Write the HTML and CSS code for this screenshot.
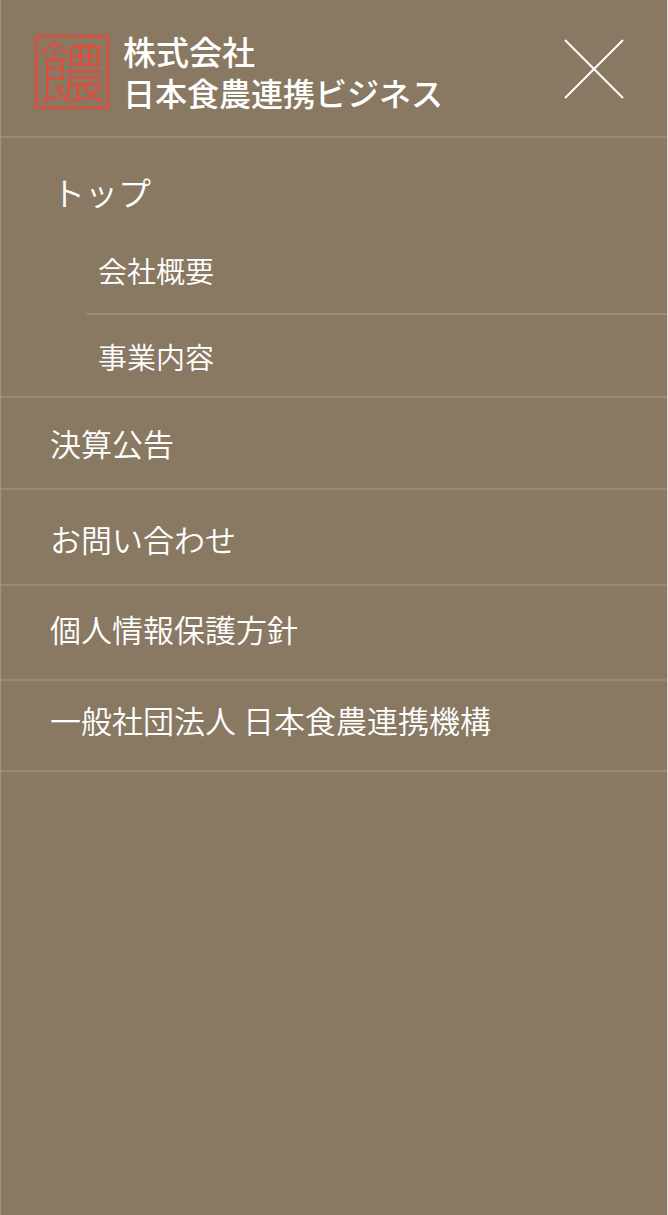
FILE: index.html
```html
<!DOCTYPE html>
<html lang="ja">
<head>
<meta charset="utf-8">
<meta name="viewport" content="width=device-width, initial-scale=1">
<title>株式会社 日本食農連携ビジネス</title>
<link rel="stylesheet" href="styles.css">
</head>
<body>
<div class="drawer">
  <header class="header">
    <a class="brand" href="#">
      <svg class="seal" viewBox="0 0 74 74" aria-hidden="true">
        <rect x="1.4" y="1.4" width="71.2" height="71.2"/>
        <path d="M7.5 19V17L19.7 7.5 31.5 18M19.7 16V24.5M12.5 65V24.5H27.7V43.5H12.5M12.5 33.5H27.7M7.5 66.5 23 61.5M21 51 31 65M23 54 29 51"/>
        <path d="M35.7 12H63.7V29.7H35.7ZM35.7 21H63.7M45.3 7.5V29.7M54.3 7.5V29.7M67 36.3H34.5V51Q34 60 31.5 67M38.5 43H64M34.5 49.7H67M42.7 49.7V65M36 66.5 55.5 62.5M48 50Q54 60 67 66.5M65 53 57 59"/>
      </svg>
      <span class="brand-name">
        <span class="brand-type">株式会社</span>
        <span class="brand-title">日本食農連携ビジネス</span>
      </span>
    </a>
    <button class="close" type="button" aria-label="閉じる">
      <svg viewBox="0 0 60 60" aria-hidden="true"><path d="M1 1 59 59M59 1 1 59"/></svg>
    </button>
  </header>
  <nav>
    <ul class="menu">
      <li>
        <a class="top" href="#">トップ</a>
        <ul class="submenu">
          <li><a href="#">会社概要</a></li>
          <li><a href="#">事業内容</a></li>
        </ul>
      </li>
      <li><a class="item" href="#">決算公告</a></li>
      <li><a class="item contact" href="#">お問い合わせ</a></li>
      <li><a class="item privacy" href="#">個人情報保護方針</a></li>
      <li><a class="item partner" href="#">一般社団法人 日本食農連携機構</a></li>
    </ul>
  </nav>
</div>
</body>
</html>
```
FILE: styles.css
```css
* { box-sizing: border-box; }

body {
  margin: 0;
  background: #897963;
  color: #fff;
  font-family: "Noto Sans CJK JP", sans-serif;
  font-weight: 350;
}

a { color: inherit; text-decoration: none; }

ul { margin: 0; padding: 0; list-style: none; }

.drawer {
  min-height: 100vh;
  border-left: 1px solid #a0947f;
  border-right: 1px solid #e4dfd8;
}

.header {
  display: flex;
  justify-content: space-between;
  align-items: flex-start;
  padding: 31px 43px 23px 34px;
  border-bottom: 2px solid #998a75;
}

.brand { display: flex; gap: 14px; }

.seal {
  width: 74px;
  height: 74px;
  margin-top: 4px;
  fill: none;
  stroke: #dc4f40;
  stroke-width: 2.7;
}

.brand-name {
  font-size: 32px;
  font-weight: 500;
  line-height: 41px;
}

.brand-type,
.brand-title { display: block; }

.brand-type { font-size: 33px; }

.close {
  margin-top: 8px;
  padding: 0;
  border: 0;
  background: none;
  cursor: pointer;
}

.close svg {
  display: block;
  width: 60px;
  height: 60px;
  stroke: #fff;
  stroke-width: 2;
}

.menu > li { border-bottom: 2px solid #998a75; }

.top {
  display: block;
  padding: 30px 51px 24px;
  font-size: 33px;
  line-height: 48px;
}

.submenu { margin-left: 85px; }

.submenu a {
  display: block;
  padding: 12px 12px 25px;
  font-size: 29px;
  line-height: 36px;
}

.submenu li + li { border-top: 2px solid #998a75; }

.submenu li + li a { padding: 23px 12px 22px; }

.item {
  display: block;
  padding: 24px 49px;
  font-size: 31px;
  line-height: 42px;
}

.contact { padding-top: 28px; }

.privacy { padding-top: 22px; padding-bottom: 29px; }

.partner { padding-top: 18px; padding-bottom: 29px; }
```
